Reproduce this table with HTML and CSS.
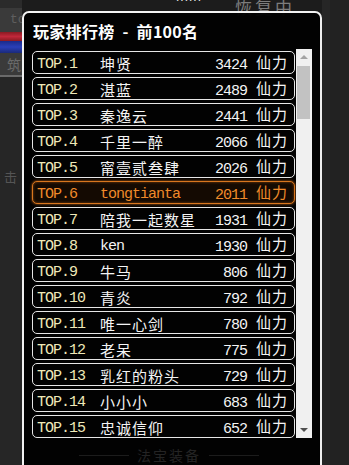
FILE: index.html
```html
<!DOCTYPE html>
<html lang="zh">
<head>
<meta charset="utf-8">
<link rel="stylesheet" href="styles.css">
</head>
<body>
<div class="scene">
  <div class="side-left">
    <div class="sl-top"></div>
    <div class="sl-panel">to</div>
    <div class="sl-red"></div>
    <div class="sl-blue"></div>
    <div class="sl-name">筑</div>
    <div class="sl-line"></div>
    <div class="sl-rest"><span class="sl-kill">击</span></div>
  </div>
  <div class="center">
    <div class="top-strip"><span class="dots">......</span><span class="recover">恢复中</span></div>
  </div>
  <div class="side-right"><div class="sr-bar"></div></div>
</div>

<div class="modal">
  <div class="title">玩家排行榜 - 前100名</div>
  <div class="list">
    <div class="rows">
      <div class="row"><span class="rank">TOP.1</span><span class="name cjk">坤贤</span><span class="val"><span class="num">3424</span> <span class="cjk">仙力</span></span></div>
      <div class="row"><span class="rank">TOP.2</span><span class="name cjk">湛蓝</span><span class="val"><span class="num">2489</span> <span class="cjk">仙力</span></span></div>
      <div class="row"><span class="rank">TOP.3</span><span class="name cjk">秦逸云</span><span class="val"><span class="num">2441</span> <span class="cjk">仙力</span></span></div>
      <div class="row"><span class="rank">TOP.4</span><span class="name cjk">千里一醉</span><span class="val"><span class="num">2066</span> <span class="cjk">仙力</span></span></div>
      <div class="row"><span class="rank">TOP.5</span><span class="name cjk">甯壹贰叁肆</span><span class="val"><span class="num">2026</span> <span class="cjk">仙力</span></span></div>
      <div class="row me"><span class="rank">TOP.6</span><span class="name lat">tongtianta</span><span class="val"><span class="num">2011</span> <span class="cjk">仙力</span></span></div>
      <div class="row"><span class="rank">TOP.7</span><span class="name cjk">陪我一起数星</span><span class="val"><span class="num">1931</span> <span class="cjk">仙力</span></span></div>
      <div class="row"><span class="rank">TOP.8</span><span class="name lat">ken</span><span class="val"><span class="num">1930</span> <span class="cjk">仙力</span></span></div>
      <div class="row"><span class="rank">TOP.9</span><span class="name cjk">牛马</span><span class="val"><span class="num">806</span> <span class="cjk">仙力</span></span></div>
      <div class="row"><span class="rank">TOP.10</span><span class="name cjk">青炎</span><span class="val"><span class="num">792</span> <span class="cjk">仙力</span></span></div>
      <div class="row"><span class="rank">TOP.11</span><span class="name cjk">唯一心剑</span><span class="val"><span class="num">780</span> <span class="cjk">仙力</span></span></div>
      <div class="row"><span class="rank">TOP.12</span><span class="name cjk">老呆</span><span class="val"><span class="num">775</span> <span class="cjk">仙力</span></span></div>
      <div class="row"><span class="rank">TOP.13</span><span class="name cjk">乳红的粉头</span><span class="val"><span class="num">729</span> <span class="cjk">仙力</span></span></div>
      <div class="row"><span class="rank">TOP.14</span><span class="name cjk">小小小</span><span class="val"><span class="num">683</span> <span class="cjk">仙力</span></span></div>
      <div class="row"><span class="rank">TOP.15</span><span class="name cjk">忠诚信仰</span><span class="val"><span class="num">652</span> <span class="cjk">仙力</span></span></div>
    </div>
    <div class="scrollbar">
      <div class="arrow up"></div>
      <div class="track"><div class="thumb"></div></div>
      <div class="arrow down"></div>
    </div>
  </div>
  <div class="footer"><span class="deco"></span><span class="ftext">法宝装备</span><span class="deco"></span></div>
</div>
</body>
</html>
```

FILE: styles.css
```css
html, body {
  margin: 0;
  padding: 0;
}
body {
  width: 349px;
  height: 465px;
  overflow: hidden;
  background: #232323;
  font-family: "Noto Sans CJK SC", sans-serif;
  position: relative;
}
.scene {
  display: flex;
  height: 465px;
}
.side-left {
  width: 22px;
  display: flex;
  flex-direction: column;
  background: #262626;
  overflow: hidden;
}
.sl-top { height: 8px; background: #2b2b2b; }
.sl-panel {
  height: 24px;
  background: #3a3a3a;
  color: #5e5e5e;
  font-family: "Liberation Mono", monospace;
  font-size: 13px;
  line-height: 24px;
  padding-left: 10px;
  white-space: nowrap;
  overflow: hidden;
}
.sl-red { height: 9px; background: linear-gradient(#8a1a22, #c0283a, #8a1a22); }
.sl-blue { height: 12px; background: linear-gradient(#1a2a8a, #2a3fb8, #1a2a7a); }
.sl-name {
  height: 22px;
  background: #3a3a3a;
  color: #6a6a6a;
  font-size: 14px;
  line-height: 22px;
  padding-left: 7px;
  overflow: hidden;
}
.sl-line { height: 2px; background: #6a6a6a; }
.sl-rest {
  flex: 1;
  padding-top: 86px;
  overflow: hidden;
  white-space: nowrap;
}
.sl-kill { color: #555; font-size: 13px; padding-left: 4px; }
.center {
  flex: 1;
  background: #1c1c1c;
}
.top-strip {
  height: 14px;
  display: flex;
  align-items: flex-start;
}
.dots {
  margin-left: 154px;
  margin-top: -10px;
  color: #e8e8e8;
  font-size: 12px;
  letter-spacing: 1px;
  font-family: "Liberation Sans", sans-serif;
}
.recover {
  margin-left: 33px;
  margin-top: -6px;
  color: #7d7d7d;
  font-size: 17px;
  letter-spacing: 3px;
}
.side-right {
  width: 27px;
  background: #262626;
  display: flex;
  justify-content: flex-end;
}
.sr-bar { width: 19px; background: #222; }

.modal {
  position: absolute;
  left: 22px;
  top: 11px;
  width: 296px;
  height: 470px;
  border: 2px solid #f2f2f2;
  border-radius: 7px;
  background: rgba(2, 2, 2, 0.97);
}
.title {
  margin: 6px 0 0 9px;
  height: 24px;
  line-height: 24px;
  color: #ffffff;
  font-weight: 700;
  font-size: 16px;
  letter-spacing: 0.3px;
  word-spacing: 4px;
}
.list {
  margin: 6px 0 0 8px;
  display: flex;
  height: 389px;
}
.rows {
  width: 263px;
  padding-top: 2px;
  display: flex;
  flex-direction: column;
  gap: 3px;
}
.row {
  height: 23px;
  box-sizing: border-box;
  border: 1px solid #e6e6e6;
  border-radius: 5px;
  display: grid;
  grid-template-columns: 63px 1fr auto;
  align-items: center;
  padding: 0 6px 0 4px;
  color: #f4f4f4;
  white-space: nowrap;
  line-height: 21px;
}
.rank, .lat, .val {
  font-family: "Liberation Mono", monospace;
  font-size: 15px;
  letter-spacing: -1px;
}
.rank { color: #efe9b8; }
.cjk {
  font-family: "Noto Sans CJK SC", sans-serif;
  font-size: 15px;
  letter-spacing: 1px;
  display: inline-block;
  transform: translateY(-1.5px);
}
.val .cjk { margin-left: 1px; }
.row.me {
  border-color: #d8761e;
  box-shadow: 0 0 3px rgba(230, 120, 30, 0.8), inset 0 0 3px rgba(230, 120, 30, 0.5);
  background: #140a02;
  color: #f08a2a;
}
.row.me .rank { color: #f08a2a; }
.scrollbar {
  width: 16px;
  margin-left: 1px;
  background: #f0f0f0;
  display: flex;
  flex-direction: column;
}
.arrow {
  height: 16px;
  display: flex;
  align-items: center;
  justify-content: center;
}
.arrow::before {
  content: "";
  width: 0;
  height: 0;
  border-left: 4px solid transparent;
  border-right: 4px solid transparent;
}
.arrow.up::before { border-bottom: 4px solid #a3a3a3; }
.arrow.down::before { border-top: 4px solid #505050; }
.track {
  flex: 1;
  padding: 1px 2px 0 1px;
}
.thumb {
  height: 53px;
  background: #c2c2c2;
}
.footer {
  margin-top: 7px;
  display: flex;
  align-items: center;
  justify-content: center;
  gap: 8px;
  padding-right: 6px;
}
.deco {
  width: 50px;
  height: 1px;
  background: #1c1c1c;
}
.ftext {
  color: #242424;
  font-size: 14px;
  letter-spacing: 2px;
}
```
